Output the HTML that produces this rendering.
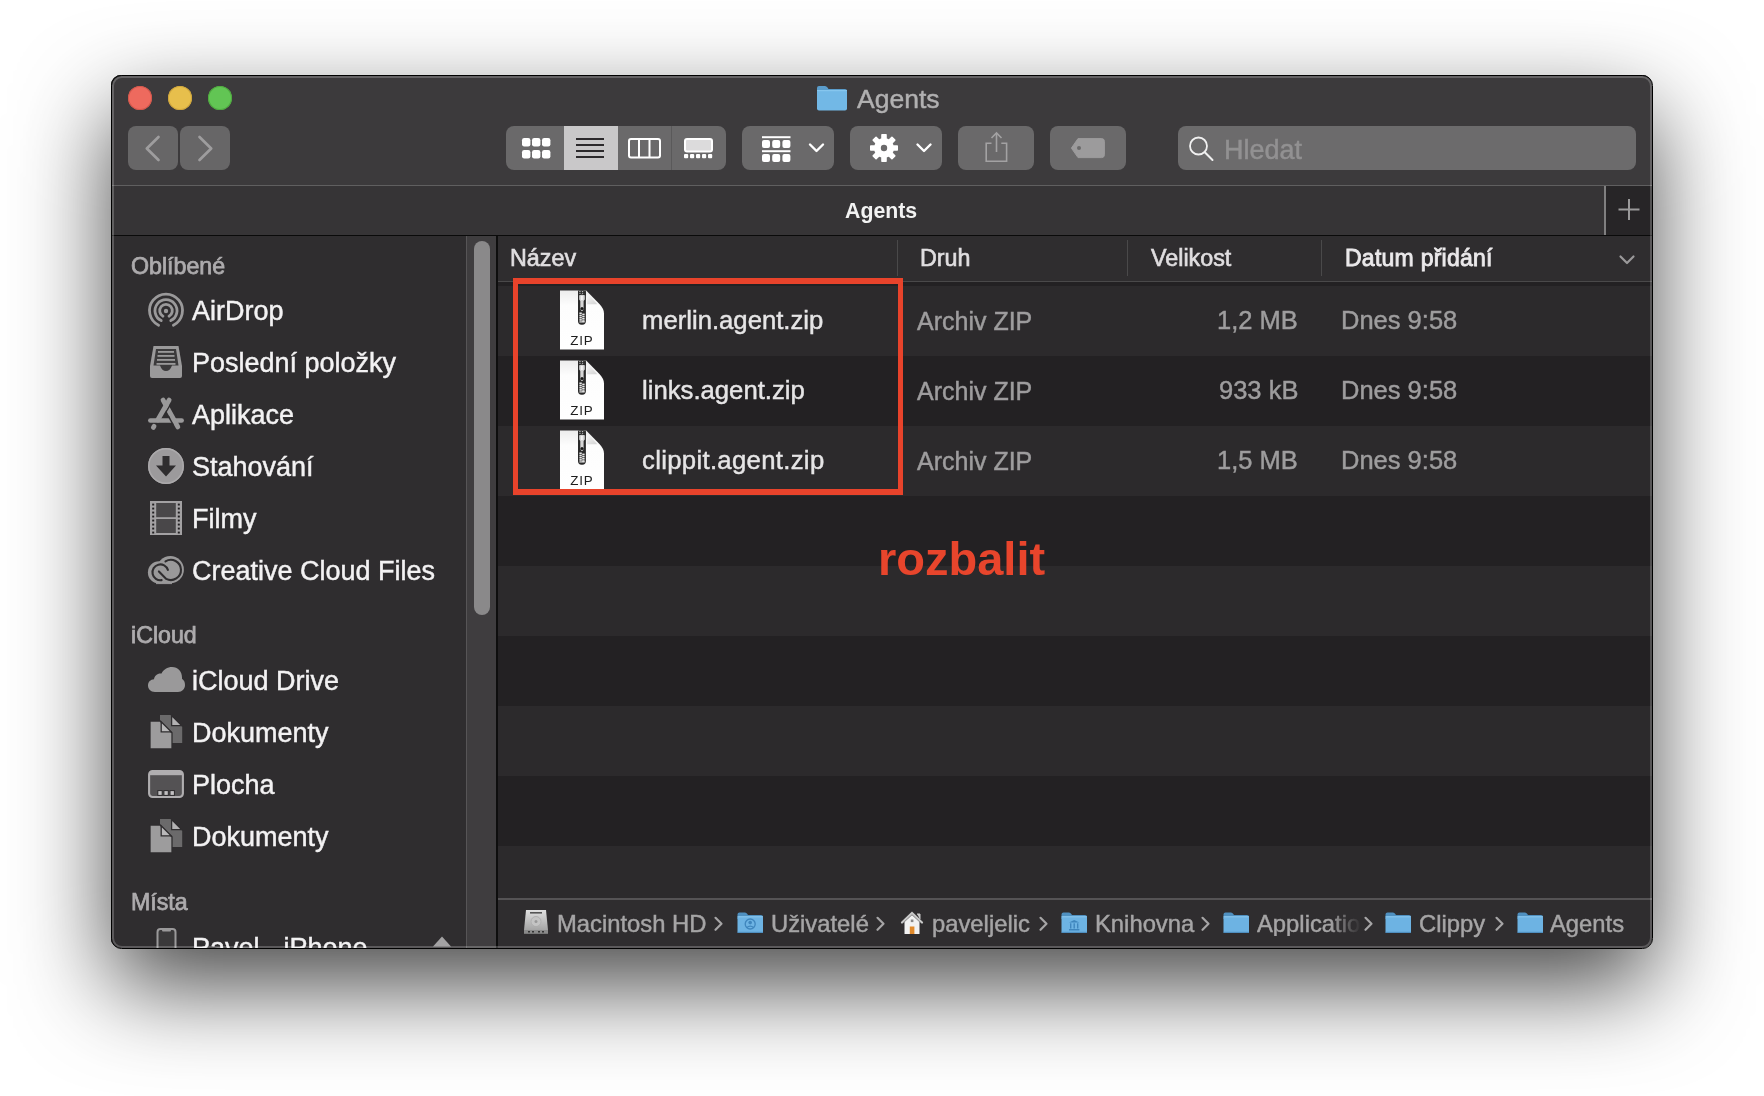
<!DOCTYPE html>
<html><head><meta charset="utf-8">
<style>
html,body{margin:0;padding:0}
body{width:1764px;height:1096px;background:#fff;position:relative;overflow:hidden;font-family:"Liberation Sans",sans-serif}
.a{position:absolute}
.t{position:absolute;line-height:1;white-space:nowrap;will-change:transform;-webkit-text-stroke-width:0.45px}
.t[style*="bold"]{-webkit-text-stroke-width:0}
#shadow{left:111px;top:75px;width:1541px;height:873px;border-radius:10px;background:#333;box-shadow:0 38px 94px rgba(0,0,0,.72)}
#win{left:0;top:0;width:1764px;height:1096px;clip-path:inset(75px 112px 148px 111px round 10px);background:#2f2d2f}
</style></head>
<body>
<div id="shadow" class="a"></div>
<div id="win" class="a">
  <!-- toolbar -->
  <div class="a" style="left:111px;top:75px;width:1541px;height:110px;background:#3c3a3c"></div>
  <!-- tab bar -->
  <div class="a" style="left:111px;top:185px;width:1541px;height:50px;background:#363436"></div>
  <div class="a" style="left:1604px;top:186px;width:48px;height:49px;background:#272527;border-left:2px solid #807f80;box-sizing:border-box"></div>
  <div class="a" style="left:111px;top:184.6px;width:1541px;height:1.6px;background:#605f60"></div>
  <div class="a" style="left:111px;top:234.5px;width:1541px;height:1.5px;background:#0a0a0a"></div>
  <!-- traffic lights -->
  <div class="a" style="left:128px;top:86px;width:24px;height:24px;border-radius:50%;background:#ee6a5e;box-shadow:inset 0 0 0 1px #d3574c"></div>
  <div class="a" style="left:168px;top:86px;width:24px;height:24px;border-radius:50%;background:#e7bf4c;box-shadow:inset 0 0 0 1px #cfa53c"></div>
  <div class="a" style="left:208px;top:86px;width:24px;height:24px;border-radius:50%;background:#62c554;box-shadow:inset 0 0 0 1px #4fa93f"></div>
  <!-- title -->
  <svg class="a" style="left:816px;top:85px" width="32" height="26" viewBox="0 0 32 26">
    <path d="M1 3 Q1 1 3 1 L9 1 Q10.5 1 11.5 2.5 L12.5 4 L29 4 Q31 4 31 6 L31 8 L1 8 Z" fill="#5a9ccb"/>
    <rect x="1" y="5" width="30" height="20.5" rx="2" fill="#72b8e6"/>
    <rect x="1" y="5" width="30" height="1.2" fill="#86c6ee"/>
  </svg>
  <div class="t" style="left:857px;top:85.5px;font-size:26.5px;color:#b1b0b1">Agents</div>
  <!-- back/forward -->
  <div class="a" style="left:128px;top:126px;width:50px;height:44px;border-radius:8px;background:#676667"></div>
  <div class="a" style="left:180px;top:126px;width:50px;height:44px;border-radius:8px;background:#676667"></div>
  <svg class="a" style="left:128px;top:126px" width="102" height="44">
    <path d="M30.5 11 L18.8 22.5 L30.5 34" fill="none" stroke="#9e9d9e" stroke-width="2.7" stroke-linecap="round" stroke-linejoin="round"/>
    <path d="M71.5 11 L83.2 22.5 L71.5 34" fill="none" stroke="#9e9d9e" stroke-width="2.7" stroke-linecap="round" stroke-linejoin="round"/>
  </svg>
  <!-- view segmented -->
  <div class="a" style="left:506px;top:126px;width:220px;height:44px;border-radius:8px;background:#6a696a;overflow:hidden">
    <div class="a" style="left:58px;top:0;width:54px;height:44px;background:#c9c8c9"></div>
    <div class="a" style="left:165px;top:0;width:1px;height:44px;background:#5a595a"></div>
  </div>
  <svg class="a" style="left:506px;top:126px" width="220" height="44">
    <g fill="#fff">
      <rect x="16" y="12" width="8.4" height="8.4" rx="2.2"/><rect x="26" y="12" width="8.4" height="8.4" rx="2.2"/><rect x="36" y="12" width="8.4" height="8.4" rx="2.2"/>
      <rect x="16" y="24" width="8.4" height="8.4" rx="2.2"/><rect x="26" y="24" width="8.4" height="8.4" rx="2.2"/><rect x="36" y="24" width="8.4" height="8.4" rx="2.2"/>
    </g>
    <g fill="#2c2a2c">
      <rect x="70" y="12" width="28" height="2"/><rect x="70" y="18" width="28" height="2"/><rect x="70" y="24" width="28" height="2"/><rect x="70" y="30" width="28" height="2"/>
    </g>
    <g fill="none" stroke="#fff" stroke-width="2">
      <rect x="123" y="13" width="31" height="18.5" rx="2"/>
      <line x1="133" y1="13" x2="133" y2="31.5"/><line x1="143.5" y1="13" x2="143.5" y2="31.5"/>
    </g>
    <rect x="179" y="13" width="27" height="12.5" rx="2" fill="#dcdbdc" stroke="#fff" stroke-width="2"/>
    <g fill="#fff">
      <rect x="178" y="28" width="4.2" height="4.2" rx="1"/><rect x="184" y="28" width="4.2" height="4.2" rx="1"/><rect x="190" y="28" width="4.2" height="4.2" rx="1"/><rect x="196" y="28" width="4.2" height="4.2" rx="1"/><rect x="202" y="28" width="4.2" height="4.2" rx="1"/>
    </g>
  </svg>
  <!-- arrange -->
  <div class="a" style="left:742px;top:126px;width:92px;height:44px;border-radius:8px;background:#6a696a"></div>
  <svg class="a" style="left:742px;top:126px" width="92" height="44">
    <g fill="#fff">
      <rect x="20" y="10.2" width="28.5" height="2"/><rect x="20" y="24.2" width="28.5" height="2"/>
      <rect x="20" y="14" width="8" height="8" rx="2"/><rect x="30.2" y="14" width="8" height="8" rx="2"/><rect x="40.4" y="14" width="8" height="8" rx="2"/>
      <rect x="20" y="28" width="8" height="8" rx="2"/><rect x="30.2" y="28" width="8" height="8" rx="2"/><rect x="40.4" y="28" width="8" height="8" rx="2"/>
    </g>
    <path d="M68 18.5 L74.5 25 L81 18.5" fill="none" stroke="#fff" stroke-width="2.4" stroke-linecap="round" stroke-linejoin="round"/>
  </svg>
  <!-- action -->
  <div class="a" style="left:850px;top:126px;width:92px;height:44px;border-radius:8px;background:#6a696a"></div>
  <svg class="a" style="left:850px;top:126px" width="92" height="44">
    <g transform="translate(34,22)" fill="#fff">
      <circle r="10"/>
      <rect x="-2.8" y="-14" width="5.6" height="28" rx="0.8"/>
      <rect x="-2.8" y="-14" width="5.6" height="28" rx="0.8" transform="rotate(45)"/>
      <rect x="-2.8" y="-14" width="5.6" height="28" rx="0.8" transform="rotate(90)"/>
      <rect x="-2.8" y="-14" width="5.6" height="28" rx="0.8" transform="rotate(135)"/>
      <circle r="3.2" fill="#6a696a"/>
    </g>
    <path d="M67.5 18.5 L74 25 L80.5 18.5" fill="none" stroke="#fff" stroke-width="2.4" stroke-linecap="round" stroke-linejoin="round"/>
  </svg>
  <!-- share -->
  <div class="a" style="left:958px;top:126px;width:76px;height:44px;border-radius:8px;background:#6a696a"></div>
  <svg class="a" style="left:958px;top:126px" width="76" height="44">
    <g fill="none" stroke="#a3a2a3" stroke-width="1.6">
      <path d="M33.5 17.2 L28.2 17.2 L28.2 35.2 L48.6 35.2 L48.6 17.2 L43.3 17.2"/>
      <path d="M38.5 26 L38.5 7.5"/>
      <path d="M33.5 12 L38.5 7 L43.5 12"/>
    </g>
  </svg>
  <!-- tag -->
  <div class="a" style="left:1050px;top:126px;width:76px;height:44px;border-radius:8px;background:#6a696a"></div>
  <svg class="a" style="left:1050px;top:126px" width="76" height="44">
    <path d="M28 12.6 L51.6 12.6 Q54.4 12.6 54.4 15.4 L54.4 28.8 Q54.4 31.6 51.6 31.6 L28 31.6 L21.4 22.1 Z" fill="#9c9b9c" stroke="#9c9b9c" stroke-width="1" stroke-linejoin="round"/>
    <circle cx="29" cy="22" r="2" fill="#6a696a"/>
  </svg>
  <!-- search -->
  <div class="a" style="left:1178px;top:126px;width:458px;height:44px;border-radius:8px;background:#6c6b6c"></div>
  <svg class="a" style="left:1178px;top:126px" width="40" height="44">
    <circle cx="20.5" cy="20" r="8.5" fill="none" stroke="#f0f0f0" stroke-width="1.8"/>
    <path d="M26.8 26.3 L34.5 34" stroke="#f0f0f0" stroke-width="2" stroke-linecap="round"/>
  </svg>
  <div class="t" style="left:1223.5px;top:137px;font-size:27px;color:#929192">Hledat</div>
  <!-- tab bar -->
  <div class="t" style="left:845px;top:201px;font-size:21.3px;font-weight:bold;color:#f2f2f2">Agents</div>
  <svg class="a" style="left:1605px;top:185px" width="47" height="50">
    <path d="M24 14 L24 35 M13.5 24.5 L34.5 24.5" stroke="#9a999a" stroke-width="2"/>
  </svg>
  <!-- sidebar -->
  <div class="a" style="left:111px;top:236px;width:386px;height:712px;background:#2f2d2f"></div>
  <div class="t" style="left:130.5px;top:254.56px;font-size:23.2px;color:#adabad;-webkit-text-stroke-width:0.75px">Oblíbené</div>
  <div class="t" style="left:192px;top:298.15px;font-size:27px;color:#f3f2f3;">AirDrop</div>
  <div class="t" style="left:192px;top:350.15px;font-size:27px;color:#f3f2f3;">Poslední položky</div>
  <div class="t" style="left:192px;top:402.15px;font-size:27px;color:#f3f2f3;">Aplikace</div>
  <div class="t" style="left:192px;top:454.15px;font-size:27px;color:#f3f2f3;">Stahování</div>
  <div class="t" style="left:192px;top:506.15px;font-size:27px;color:#f3f2f3;">Filmy</div>
  <div class="t" style="left:192px;top:558.15px;font-size:27px;color:#f3f2f3;">Creative Cloud Files</div>
  <div class="t" style="left:130.5px;top:624.26px;font-size:23.2px;color:#adabad;-webkit-text-stroke-width:0.75px">iCloud</div>
  <div class="t" style="left:192px;top:668.15px;font-size:27px;color:#f3f2f3;">iCloud Drive</div>
  <div class="t" style="left:192px;top:720.15px;font-size:27px;color:#f3f2f3;">Dokumenty</div>
  <div class="t" style="left:192px;top:772.15px;font-size:27px;color:#f3f2f3;">Plocha</div>
  <div class="t" style="left:192px;top:824.15px;font-size:27px;color:#f3f2f3;">Dokumenty</div>
  <div class="t" style="left:130.5px;top:890.56px;font-size:23.2px;color:#adabad;-webkit-text-stroke-width:0.75px">Místa</div>
  <div class="t" style="left:192px;top:935.15px;font-size:27px;color:#f3f2f3;">Pavel - iPhone</div>

  <svg class="a" style="left:140px;top:285px" width="52" height="310" viewBox="140 285 52 310">
    <!-- airdrop -->
    <g fill="none" stroke="#9a999a" stroke-width="2.8" stroke-linecap="round">
      <path d="M158.6 325.3 A16.5 16.5 0 1 1 173.4 325.3"/>
      <path d="M161.2 320.6 A11 11 0 1 1 170.8 320.6"/>
      <path d="M163 316.2 A6.3 6.3 0 1 1 169 316.2"/>
    </g>
    <circle cx="166" cy="311" r="2.2" fill="#9a999a"/>
    <!-- recents tray -->
    <path d="M153.5 346 L178.5 346 L182 366 L182 376 Q182 378 180 378 L152 378 Q150 378 150 376 L150 366 Z" fill="#9a999a"/>
    <path d="M156 349 L176 349 L178.5 365.5 L172 365.5 Q170 371 166 371 Q162 371 160 365.5 L153.5 365.5 Z" fill="#3b3a3b"/>
    <g fill="#9a999a"><rect x="158" y="351" width="16" height="1.8"/><rect x="157.5" y="355" width="17" height="1.8"/><rect x="157" y="359" width="18" height="1.8"/><rect x="156.5" y="363" width="19" height="1.8"/></g>
    <!-- aplikace -->
    <g stroke-linecap="round" fill="none">
      <path d="M163 400 L177.9 427" stroke="#9a999a" stroke-width="4.7"/>
      <path d="M150.4 420.5 L181.6 420.5" stroke="#9a999a" stroke-width="4.7"/>
      <path d="M168.4 416.2 L173.2 424.8" stroke="#2f2d2f" stroke-width="1.4" stroke-linecap="butt"/>
      <path d="M170.3 404.6 L165.2 413.4" stroke="#2f2d2f" stroke-width="1.4" stroke-linecap="butt"/>
      <path d="M169.2 400 L157.7 420" stroke="#9a999a" stroke-width="4.7"/>
      <path d="M154.1 426.2 L153.3 427.5" stroke="#9a999a" stroke-width="4.7"/>
    </g>
    <!-- downloads -->
    <circle cx="166" cy="466" r="18" fill="#9c9a9c"/><circle cx="166" cy="466" r="17.2" fill="none" stroke="#acaaac" stroke-width="1.4"/>
    <path d="M162.5 456 L169.5 456 L169.5 465.5 L176 465.5 L166 476.5 L156 465.5 L162.5 465.5 Z" fill="#2f2d2f"/>
    <!-- films -->
    <rect x="150" y="501" width="32" height="34" fill="#a3a1a3"/>
    <rect x="156.2" y="503" width="19.6" height="14.2" fill="#494749"/>
    <rect x="156.2" y="519" width="19.6" height="14" fill="#494749"/>
    <g fill="#1f1d1f"><rect x="152.2" y="503.6" width="2" height="1.9"/><rect x="177.8" y="503.6" width="2" height="1.9"/><rect x="152.2" y="507.6" width="2" height="1.9"/><rect x="177.8" y="507.6" width="2" height="1.9"/><rect x="152.2" y="511.6" width="2" height="1.9"/><rect x="177.8" y="511.6" width="2" height="1.9"/><rect x="152.2" y="515.6" width="2" height="1.9"/><rect x="177.8" y="515.6" width="2" height="1.9"/><rect x="152.2" y="519.6" width="2" height="1.9"/><rect x="177.8" y="519.6" width="2" height="1.9"/><rect x="152.2" y="523.6" width="2" height="1.9"/><rect x="177.8" y="523.6" width="2" height="1.9"/><rect x="152.2" y="527.6" width="2" height="1.9"/><rect x="177.8" y="527.6" width="2" height="1.9"/><rect x="152.2" y="531.6" width="2" height="1.9"/><rect x="177.8" y="531.6" width="2" height="1.9"/></g>
    <!-- creative cloud -->
    <g transform="translate(144,552)">
      <circle cx="15.1" cy="20.4" r="11.2" fill="#9a999a"/>
      <circle cx="26.3" cy="17.7" r="13.6" fill="#9a999a"/>
      <rect x="15.1" y="20" width="11.2" height="11.6" fill="#9a999a"/>
      <path d="M12 31.6 L28 31.6" stroke="#9a999a" stroke-width="1"/>
      <g fill="none" stroke="#2f2d2f" stroke-width="2.1" stroke-linecap="round">
        <path d="M17.6 28.1 A7.9 7.9 0 1 1 23.9 17.9"/>
        <path d="M21.5 9.4 A10.1 10.1 0 1 1 22.2 26.9 L14.9 19.4"/>
      </g>
    </g>
  </svg>
  <svg class="a" style="left:140px;top:655px" width="52" height="300" viewBox="140 655 52 300">
    <!-- cloud -->
    <path d="M155 692 C150.5 692 148 689 148 685.5 C148 682 150.5 679.5 154 679.3 C154.5 675.5 157.5 673 161.5 673.5 C163.5 669.5 167.5 667 172 667 C178 667 182 671.5 182 677.5 L182 678.8 C184 680 185 682.5 185 685 C185 689 182 692 178 692 Z" fill="#9a999a"/>
    <!-- docs x2 -->
    <g id="docs">
      <path d="M160 715 L170.5 715 L182.2 726.7 L182.2 743 L160 743 Z" fill="#6b6a6b"/>
      <path d="M171.6 715.6 L171.6 725.6 L181.6 725.6 Z" fill="#b3b2b3" stroke="#2f2d2f" stroke-width="1.3" stroke-linejoin="miter"/>
      <path d="M150 721 L160 721 L172 733 L172 749 L150 749 Z" fill="#9d9c9d" stroke="#2f2d2f" stroke-width="1.3"/>
      <path d="M161.2 721.8 L161.2 731.8 L171.2 731.8 Z" fill="#b9b8b9" stroke="#2f2d2f" stroke-width="1.3"/>
    </g>
    <use href="#docs" transform="translate(0,104)"/>
    <!-- desktop -->
    <rect x="149.1" y="771" width="33.8" height="26" rx="3.5" fill="#545254" stroke="#b0aeb0" stroke-width="2.1"/><rect x="150" y="772" width="32" height="3.2" fill="#b0aeb0"/>
        <g fill="#c2c0c2" stroke="#2a282a" stroke-width="1"><rect x="157.8" y="790.6" width="4.4" height="4.8"/><rect x="163.9" y="790.6" width="4.4" height="4.8"/><rect x="170" y="790.6" width="4.4" height="4.8"/></g>
    <!-- iphone -->
    <rect x="157.5" y="929" width="18" height="36" rx="3" fill="#3a393a" stroke="#9a999a" stroke-width="2"/>
    <rect x="162" y="929.5" width="9" height="2" rx="1" fill="#9a999a"/>
  </svg>
  <svg class="a" style="left:430px;top:930px" width="24" height="20"><path d="M3 16.5 L12 6.5 L21 16.5 Z" fill="#a3a2a3"/></svg>
  <div class="a" style="left:466px;top:236px;width:30px;height:712px;background:#3f3d3f;border-left:1.6px solid #575557;box-sizing:border-box"></div>
  <div class="a" style="left:474px;top:241px;width:16px;height:374px;border-radius:8px;background:#8a898a"></div>
  <div class="a" style="left:496px;top:236px;width:2px;height:712px;background:#0e0e0e"></div>
  <!-- main -->
  <div class="a" style="left:498px;top:236px;width:1154px;height:46px;background:#2f2d2f"></div>
  <div class="a" style="left:498px;top:281px;width:1154px;height:1px;background:#4a494a"></div>
  <div class="a" style="left:498px;top:282px;width:1154px;height:4px;background:#232123"></div>
  <div class="a" style="left:498px;top:286px;width:1154px;height:70px;background:#2c2a2c"></div>
  <div class="a" style="left:498px;top:356px;width:1154px;height:70px;background:#232123"></div>
  <div class="a" style="left:498px;top:426px;width:1154px;height:70px;background:#2c2a2c"></div>
  <div class="a" style="left:498px;top:496px;width:1154px;height:70px;background:#232123"></div>
  <div class="a" style="left:498px;top:566px;width:1154px;height:70px;background:#2c2a2c"></div>
  <div class="a" style="left:498px;top:636px;width:1154px;height:70px;background:#232123"></div>
  <div class="a" style="left:498px;top:706px;width:1154px;height:70px;background:#2c2a2c"></div>
  <div class="a" style="left:498px;top:776px;width:1154px;height:70px;background:#232123"></div>
  <div class="a" style="left:498px;top:846px;width:1154px;height:52px;background:#2c2a2c"></div>
  <svg width="0" height="0" style="position:absolute">
    <defs>
      <linearGradient id="pg" x1="0" y1="0" x2="0" y2="1"><stop offset="0" stop-color="#ececec"/><stop offset="0.25" stop-color="#fdfdfd"/><stop offset="1" stop-color="#ffffff"/></linearGradient>
      <linearGradient id="fg" x1="0" y1="0" x2="0.6" y2="1"><stop offset="0" stop-color="#fafafa"/><stop offset="1" stop-color="#d9d9d9"/></linearGradient>
      <g id="zipicon">
        <path d="M1 0.5 L27.2 0.5 L40.2 13.8 Q45 18.8 45 23.5 L45 59.5 L1 59.5 Z" fill="url(#pg)"/>
        <path d="M28.2 3.2 L28.2 14.3 L38.4 14.3 Z" fill="url(#fg)"/>
        <rect x="19" y="0.5" width="7.9" height="34.2" rx="3.6" fill="#2a2a2a"/>
        <rect x="19" y="0.5" width="7.9" height="5" fill="#2a2a2a"/>
        <path d="M20.3 1.5 L25.6 1.5 M20.3 3.3 L25.6 3.3" stroke="#cfcfcf" stroke-width="0.9" stroke-dasharray="1.3 1.3" fill="none"/>
        <path d="M20.2 5.2 Q23 4.2 25.8 5.2 L25.8 9.5 L24.6 11 L24.6 18 Q24.6 21 23 21.2 Q21.3 21 21.3 18 L21.3 11 L20.2 9.5 Z" fill="#d6d6d6"/>
        <rect x="22" y="6" width="1.8" height="4" fill="#f4f4f4"/>
        <circle cx="23" cy="18.4" r="1.5" fill="#151515"/>
        <g fill="#e8e8e8"><rect x="20.4" y="22.5" width="2.4" height="1.6"/><rect x="23.2" y="23.6" width="2.4" height="1.6"/><rect x="20.4" y="24.7" width="2.4" height="1.6"/><rect x="23.2" y="25.8" width="2.4" height="1.6"/><rect x="20.4" y="26.9" width="2.4" height="1.6"/><rect x="23.2" y="28" width="2.4" height="1.6"/><rect x="20.4" y="29.1" width="2.4" height="1.6"/><rect x="23.2" y="30.2" width="2.4" height="1.6"/><rect x="20.4" y="31.3" width="5.2" height="1.2"/></g>
        <text x="22.8" y="55.3" text-anchor="middle" font-family="Liberation Sans" font-size="13.4" fill="#1e1e1e" letter-spacing="0.7">ZIP</text>
      </g>
    </defs>
  </svg>
  <div class="t" style="left:509.7px;top:246.57px;font-size:23.3px;color:#e0dee0;-webkit-text-stroke-width:0.6px">Název</div>
  <div class="t" style="left:920px;top:246.57px;font-size:23.3px;color:#e0dee0;-webkit-text-stroke-width:0.6px">Druh</div>
  <div class="t" style="left:1151.3px;top:246.57px;font-size:23.3px;color:#e0dee0;-webkit-text-stroke-width:0.6px">Velikost</div>
  <div class="t" style="left:1344.5px;top:246.73px;font-size:23px;color:#ebe9eb;-webkit-text-stroke-width:0.85px;letter-spacing:0.25px">Datum přidání</div>
  <div class="a" style="left:897px;top:240px;width:1px;height:36px;background:#4a494a"></div>
  <div class="a" style="left:1127px;top:240px;width:1px;height:36px;background:#4a494a"></div>
  <div class="a" style="left:1321px;top:240px;width:1px;height:36px;background:#4a494a"></div>
  <svg class="a" style="left:1615px;top:250px" width="24" height="20"><path d="M5.5 6.5 L12 13 L18.5 6.5" fill="none" stroke="#9a999a" stroke-width="2.2" stroke-linecap="round" stroke-linejoin="round"/></svg>
  <div class="t" style="left:642px;top:308.24px;font-size:25.7px;color:#e6e5e6;">merlin.agent.zip</div>
  <div class="t" style="left:917px;top:308.83px;font-size:25px;color:#9e9d9e;">Archiv ZIP</div>
  <div class="t" style="right:466px;top:308.41px;font-size:25.5px;color:#9e9d9e">1,2 MB</div>
  <div class="t" style="left:1341px;top:308.41px;font-size:25.5px;color:#9e9d9e;">Dnes 9:58</div>
  <svg class="a" style="left:559px;top:289.5px;will-change:transform" width="46" height="60"><use href="#zipicon"/></svg>
  <div class="t" style="left:642px;top:378.24px;font-size:25.7px;color:#e6e5e6;">links.agent.zip</div>
  <div class="t" style="left:917px;top:378.83px;font-size:25px;color:#9e9d9e;">Archiv ZIP</div>
  <div class="t" style="right:466px;top:378.41px;font-size:25.5px;color:#9e9d9e">933 kB</div>
  <div class="t" style="left:1341px;top:378.41px;font-size:25.5px;color:#9e9d9e;">Dnes 9:58</div>
  <svg class="a" style="left:559px;top:359.5px;will-change:transform" width="46" height="60"><use href="#zipicon"/></svg>
  <div class="t" style="left:642px;top:448.24px;font-size:25.7px;color:#e6e5e6;letter-spacing:0.32px">clippit.agent.zip</div>
  <div class="t" style="left:917px;top:448.83px;font-size:25px;color:#9e9d9e;">Archiv ZIP</div>
  <div class="t" style="right:466px;top:448.41px;font-size:25.5px;color:#9e9d9e">1,5 MB</div>
  <div class="t" style="left:1341px;top:448.41px;font-size:25.5px;color:#9e9d9e;">Dnes 9:58</div>
  <svg class="a" style="left:559px;top:429.5px;will-change:transform" width="46" height="60"><use href="#zipicon"/></svg>
  <!-- red box -->
  <div class="a" style="left:513px;top:278px;width:380px;height:205px;border:5.5px solid #e8432b;border-top-width:6px;border-bottom-width:6px"></div>
  <div class="t" style="left:877.7px;top:535.4px;font-size:47px;font-weight:bold;color:#e8452c">rozbalit</div>
  <!-- path bar -->
  <div class="a" style="left:498px;top:897.8px;width:1154px;height:1.8px;background:#555355"></div>
  <div class="a" style="left:498px;top:899.6px;width:1154px;height:49px;background:#2f2d2f"></div>
  <svg width="0" height="0" style="position:absolute"><defs>
    <g id="fold">
      <path d="M0.5 2.5 Q0.5 0.5 2.5 0.5 L8 0.5 Q9.5 0.5 10.3 2 L11 3 L24 3 Q26 3 26 5 L26 7 L0.5 7 Z" fill="#4f90c0"/>
      <rect x="0.5" y="4.3" width="25.5" height="16.7" rx="1.6" fill="#6db3e3"/>
      <rect x="0.5" y="4.3" width="25.5" height="1" fill="#8dc8ee"/>
      <rect x="0.5" y="19.8" width="25.5" height="1.2" fill="#4f8fc0"/>
    </g>
  </defs></svg>
  <svg class="a" style="left:523px;top:909px" width="26" height="26">
    <defs><linearGradient id="hdg" x1="0" y1="0" x2="0" y2="1"><stop offset="0" stop-color="#e0e0e0"/><stop offset="1" stop-color="#9a9a9a"/></linearGradient></defs>
    <path d="M3 1 L23 1 L25 21 L25 24.5 L1 24.5 L1 21 Z" fill="url(#hdg)"/>
    <rect x="1" y="21" width="24" height="3.5" fill="#8a8a8a"/>
    <rect x="7" y="3" width="12" height="1.6" fill="#555"/>
    <circle cx="13" cy="12.5" r="5" fill="#c4c4c4" stroke="#aaa" stroke-width="0.8"/>
    <circle cx="13" cy="12.5" r="1.5" fill="#999"/>
    <g fill="#333"><rect x="5" y="22" width="2" height="1.5"/><rect x="9" y="22" width="2" height="1.5"/><rect x="15" y="22" width="2" height="1.5"/><rect x="19" y="22" width="2" height="1.5"/></g>
  </svg>
  <div class="t" style="left:556.5px;top:912.3px;font-size:23.8px;color:#a6a5a6;">Macintosh HD</div>
  <svg class="a" style="left:713.0px;top:914px" width="12" height="20"><path d="M2.5 3.8 L8.5 9.8 L2.5 15.8" fill="none" stroke="#a6a5a6" stroke-width="2.2" stroke-linecap="round" stroke-linejoin="round"/></svg>
  <svg class="a" style="left:737px;top:912px" width="27" height="22"><use href="#fold"/><circle cx="13.2" cy="12" r="5" fill="none" stroke="#3f86bd" stroke-width="1.3"/><circle cx="13.2" cy="10.6" r="1.8" fill="#3f86bd"/><path d="M9.8 15.6 Q13.2 12.8 16.6 15.6" stroke="#3f86bd" stroke-width="1.3" fill="none"/></svg>
  <div class="t" style="left:770.5px;top:912.3px;font-size:23.8px;color:#a6a5a6;">Uživatelé</div>
  <svg class="a" style="left:875.0px;top:914px" width="12" height="20"><path d="M2.5 3.8 L8.5 9.8 L2.5 15.8" fill="none" stroke="#a6a5a6" stroke-width="2.2" stroke-linecap="round" stroke-linejoin="round"/></svg>
  <svg class="a" style="left:900px;top:910px" width="24" height="25">
    <path d="M2 12.5 L12 3 L22 12.5" fill="none" stroke="#c9c9c9" stroke-width="2.2" stroke-linecap="round"/>
    <path d="M17 4 L20 4 L20 9" fill="#c9c9c9" stroke="#c9c9c9" stroke-width="1"/>
    <path d="M4.5 12 L12 5 L19.5 12 L19.5 24 L4.5 24 Z" fill="#f2f2f2"/>
    <rect x="9.8" y="16.5" width="4.6" height="7.5" fill="#e08a2c"/>
    <rect x="10.8" y="9.5" width="2.6" height="2.6" fill="#888"/>
  </svg>
  <div class="t" style="left:932.0px;top:912.3px;font-size:23.8px;color:#a6a5a6;">paveljelic</div>
  <svg class="a" style="left:1038.0px;top:914px" width="12" height="20"><path d="M2.5 3.8 L8.5 9.8 L2.5 15.8" fill="none" stroke="#a6a5a6" stroke-width="2.2" stroke-linecap="round" stroke-linejoin="round"/></svg>
  <svg class="a" style="left:1060.5px;top:912px" width="27" height="22"><use href="#fold"/><g fill="#3f86bd"><path d="M8 10.5 L13.2 8 L18.4 10.5 Z"/><rect x="8" y="17" width="10.4" height="1.5"/><rect x="9" y="11.3" width="1.4" height="5.2"/><rect x="12.5" y="11.3" width="1.4" height="5.2"/><rect x="16" y="11.3" width="1.4" height="5.2"/></g></svg>
  <div class="t" style="left:1094.5px;top:912.3px;font-size:23.8px;color:#a6a5a6;">Knihovna</div>
  <svg class="a" style="left:1200.0px;top:914px" width="12" height="20"><path d="M2.5 3.8 L8.5 9.8 L2.5 15.8" fill="none" stroke="#a6a5a6" stroke-width="2.2" stroke-linecap="round" stroke-linejoin="round"/></svg>
  <svg class="a" style="left:1222.5px;top:912px" width="27" height="22"><use href="#fold"/></svg>
  <div class="t" style="left:1256.5px;top:912.3px;font-size:23.8px;color:#a6a5a6;width:104px;overflow:hidden;-webkit-mask-image:linear-gradient(90deg,#000 70%,transparent 100%)">Applicatio</div>
  <svg class="a" style="left:1363.0px;top:914px" width="12" height="20"><path d="M2.5 3.8 L8.5 9.8 L2.5 15.8" fill="none" stroke="#a6a5a6" stroke-width="2.2" stroke-linecap="round" stroke-linejoin="round"/></svg>
  <svg class="a" style="left:1384.5px;top:912px" width="27" height="22"><use href="#fold"/></svg>
  <div class="t" style="left:1418.5px;top:912.3px;font-size:23.8px;color:#a6a5a6;">Clippy</div>
  <svg class="a" style="left:1493.5px;top:914px" width="12" height="20"><path d="M2.5 3.8 L8.5 9.8 L2.5 15.8" fill="none" stroke="#a6a5a6" stroke-width="2.2" stroke-linecap="round" stroke-linejoin="round"/></svg>
  <svg class="a" style="left:1516.5px;top:912px" width="27" height="22"><use href="#fold"/></svg>
  <div class="t" style="left:1550.0px;top:912.3px;font-size:23.8px;color:#a6a5a6;">Agents</div>
</div>
<!-- window border -->
<div class="a" style="left:110.5px;top:74.5px;width:1542px;height:874px;box-sizing:border-box;border:1.2px solid #000;border-radius:10.5px"></div>
<div class="a" style="left:111.5px;top:75.5px;width:1540.5px;height:872px;box-sizing:border-box;border:2px solid rgba(255,255,255,0.21);border-radius:10px"></div>
</body></html>
